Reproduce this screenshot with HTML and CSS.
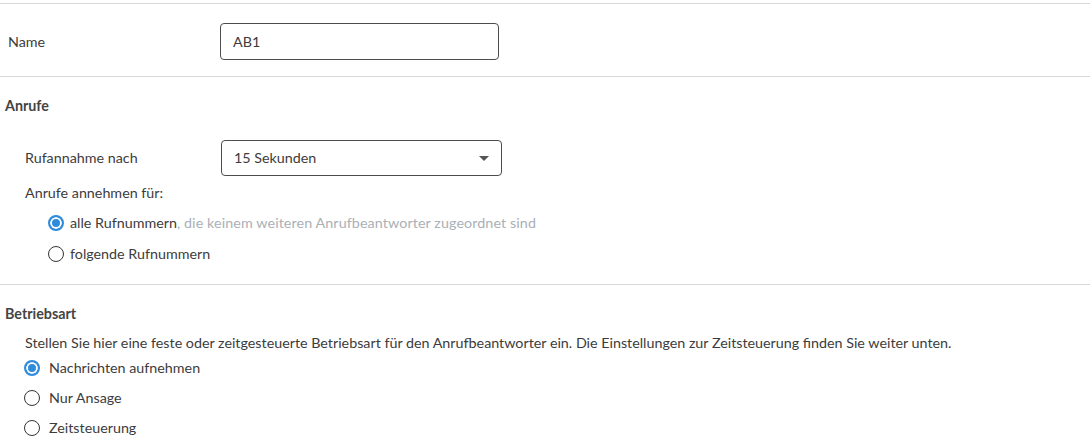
FILE: index.html
```html
<!DOCTYPE html>
<html lang="de">
<head>
    <meta charset="UTF-8">
    <title>Anrufbeantworter - Einstellungen</title>
    <link rel="stylesheet" href="styles.css">
</head>
<body>
    <div class="page">
        <hr class="divider divider-top">

        <div class="field field-name">
            <label class="field-label" for="ab-name">Name</label>
            <input class="text-input" id="ab-name" type="text" value="AB1">
        </div>

        <hr class="divider">

        <section class="group">
            <h2 class="group-title">Anrufe</h2>

            <div class="field field-sub">
                <label class="field-label">Rufannahme nach</label>
                <div class="select">
                    <span class="select-value">15 Sekunden</span>
                    <span class="select-arrow"></span>
                </div>
            </div>

            <div class="sub-label">Anrufe annehmen für:</div>
            <ul class="radio-list radio-list-indent">
                <li class="radio-item">
                    <span class="radio checked"></span>
                    <span>alle Rufnummern<span class="hint">, die keinem weiteren Anrufbeantworter zugeordnet sind</span></span>
                </li>
                <li class="radio-item">
                    <span class="radio"></span>
                    <span>folgende Rufnummern</span>
                </li>
            </ul>
        </section>

        <hr class="divider">

        <section class="group">
            <h2 class="group-title">Betriebsart</h2>
            <p class="group-text">Stellen Sie hier eine feste oder zeitgesteuerte Betriebsart für den Anrufbeantworter ein. Die Einstellungen zur Zeitsteuerung finden Sie weiter unten.</p>
            <ul class="radio-list radio-list-mode">
                <li class="radio-item">
                    <span class="radio checked"></span>
                    <span>Nachrichten aufnehmen</span>
                </li>
                <li class="radio-item">
                    <span class="radio"></span>
                    <span>Nur Ansage</span>
                </li>
                <li class="radio-item">
                    <span class="radio"></span>
                    <span>Zeitsteuerung</span>
                </li>
            </ul>
        </section>
    </div>
</body>
</html>
```

FILE: styles.css
```css
:root {
    --text: #3c3c3c;
    --text-muted: #a9b0b6;
    --line: #d9d9d9;
    --border: #4d4d4d;
    --blue: #2f8bdb;
}

* {
    margin: 0;
    padding: 0;
    box-sizing: border-box;
}

body {
    font-family: Lato, "Noto Sans", sans-serif;
    font-size: 14.3px;
    line-height: 20px;
    color: var(--text);
    background: #fff;
}

.page {
    width: 1090px;
}

/* Dividers between groups */
.divider {
    border: none;
    border-top: 1px solid var(--line);
}

.divider-top {
    margin-top: 3px;
}

/* Label + control rows */
.field {
    display: flex;
    align-items: center;
}

.field-name {
    padding: 19px 0 16px 8px;
}

.field-name .field-label {
    width: 212px;
}

.field-sub {
    margin-top: 24px;
    padding-left: 25px;
}

.field-sub .field-label {
    width: 196px;
}

.text-input {
    width: 279px;
    height: 37px;
    padding: 0 12px;
    border: 1px solid var(--border);
    border-radius: 4px;
    font: inherit;
    color: var(--text);
    outline: none;
}

.select {
    position: relative;
    width: 281px;
    height: 36px;
    padding: 0 12px;
    border: 1px solid var(--border);
    border-radius: 4px;
    display: flex;
    align-items: center;
}

.select-arrow {
    position: absolute;
    right: 12px;
    top: 15px;
    border-left: 5px solid transparent;
    border-right: 5px solid transparent;
    border-top: 5px solid #555;
}

/* Groups */
.group-title {
    margin-top: 19px;
    padding-left: 5px;
    font-size: 14.3px;
    font-weight: 700;
    color: #444;
}

.sub-label {
    margin-top: 7px;
    padding-left: 25px;
}

.group-text {
    margin-top: 9px;
    padding-left: 25px;
}

.hint {
    color: var(--text-muted);
    letter-spacing: 0.1px;
}

/* Radio buttons */
.radio-list {
    list-style: none;
    padding-left: 24px;
    margin-bottom: 15px;
}

.radio-list-indent {
    margin-top: 4px;
    padding-left: 48px;
}

.radio-item {
    display: flex;
    align-items: center;
    gap: 9px;
    height: 31px;
}

.radio-list-mode .radio-item {
    height: 30px;
}

.radio-list-indent .radio-item {
    gap: 6px;
}

.radio {
    width: 16px;
    height: 16px;
    flex: none;
    border: 1.5px solid #333;
    border-radius: 50%;
}

.radio.checked {
    border: 2px solid var(--blue);
    background: var(--blue);
    box-shadow: inset 0 0 0 2px #fff;
}
```
